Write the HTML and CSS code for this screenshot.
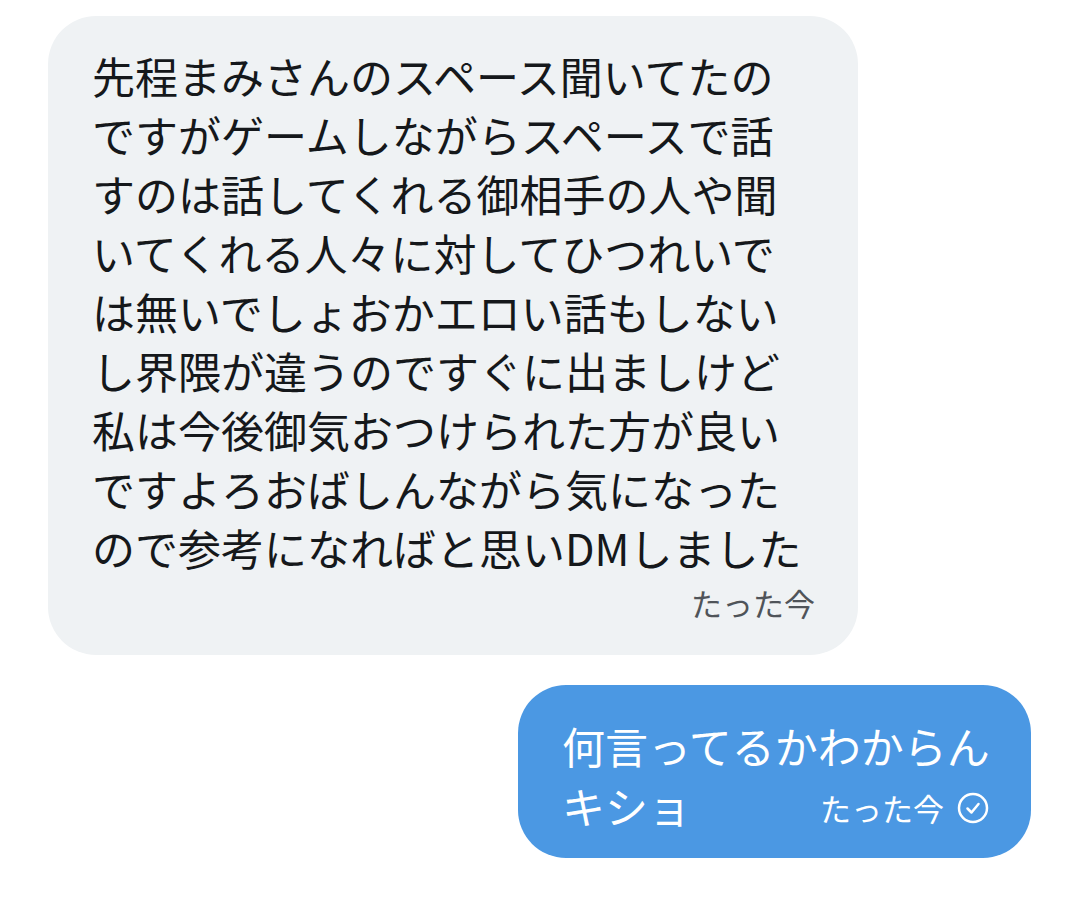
FILE: index.html
```html
<!DOCTYPE html>
<html lang="ja">
<head>
    <meta charset="UTF-8">
    <meta name="viewport" content="width=device-width, initial-scale=1.0">
    <title>DM</title>
    <link rel="stylesheet" href="styles.css">
</head>
<body>

    <div class="thread">
        <div class="msg msg-in">
            <p class="msg-text">先程まみさんのスペース聞いてたの<br>ですがゲームしながらスペースで話<br>すのは話してくれる御相手の人や聞<br>いてくれる人々に対してひつれいで<br>は無いでしょおかエロい話もしない<br>し界隈が違うのですぐに出ましけど<br>私は今後御気おつけられた方が良い<br>ですよろおばしんながら気になった<br>ので参考になればと思いDMしました</p>
            <div class="msg-time">たった今</div>
        </div>

        <div class="msg msg-out">
            <p class="msg-text">何言ってるかわからん</p>
            <div class="last-row">
                <span class="msg-text">キショ</span>
                <span class="msg-time">たった今
                    <svg class="check" viewBox="0 0 32 32">
                        <circle cx="16" cy="16" r="14" fill="none" stroke="#fff" stroke-width="2.5"/>
                        <path d="M10.5 16.5 L14.5 20.5 L21.5 12" fill="none" stroke="#fff" stroke-width="2.5" stroke-linecap="round" stroke-linejoin="round"/>
                    </svg>
                </span>
            </div>
        </div>
    </div>

</body>
</html>
```

FILE: styles.css
```css
body {
    margin: 0;
    background-color: #fff;
    font-family: "Noto Sans CJK JP", "Noto Sans", sans-serif;
    color: #15181b;
}

.thread {
    display: flex;
    flex-direction: column;
    padding: 16px 49px 0 48px;
    gap: 30px;
}

.msg {
    border-radius: 48px;
}

.msg-text {
    margin: 0;
    font-size: 43px;
    line-height: 59px;
}

/* received message */
.msg-in {
    align-self: flex-start;
    width: 723px;
    background-color: #eff2f4;
    padding: 30px 43px 34px 44px;
}

.msg-in .msg-time {
    text-align: right;
    font-size: 31px;
    line-height: 36px;
    margin-top: 8px;
    color: #4f5459;
}

/* sent message */
.msg-out {
    align-self: flex-end;
    width: 437px;
    background-color: #4b98e3;
    color: #fff;
    padding: 30px 32px 23px 44px;
}

.msg-out .msg-text {
    line-height: 60px;
}

.last-row {
    display: flex;
    justify-content: space-between;
    align-items: center;
}

.msg-out .msg-time {
    display: flex;
    align-items: center;
    gap: 13px;
    font-size: 31px;
    line-height: 36px;
    margin-right: 10px;
    padding-top: 6px;
}

.check {
    flex-shrink: 0;
    width: 32px;
    height: 32px;
}
```
